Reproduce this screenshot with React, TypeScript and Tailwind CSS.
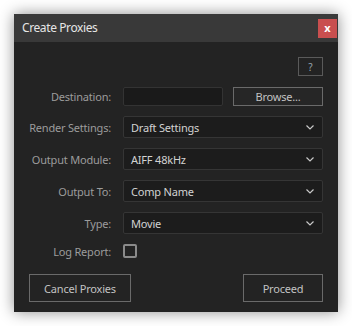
import React from "react";

const font = { fontFamily: '"Noto Sans", "Open Sans", sans-serif' };

function Chevron() {
  return (
    <svg width="8" height="5" viewBox="0 0 8 5" className="shrink-0">
      <path d="M0.5 0.5 L4 4 L7.5 0.5" fill="none" stroke="#c8c8c8" strokeWidth="1.2" />
    </svg>
  );
}

function Row({ label, children }: { label: string; children: React.ReactNode }) {
  return (
    <div className="flex items-center">
      <div className="w-[97px] text-right text-[11px] tracking-[-0.2px] text-[#9c9c9c] leading-none">{label}</div>
      <div className="ml-[12px] flex items-center">{children}</div>
    </div>
  );
}

function Select({ value }: { value: string }) {
  return (
    <div className="w-[200px] h-[22px] bg-[#1c1c1c] border border-[#353535] rounded-[2px] flex items-center justify-between pl-[7px] pr-[8px]">
      <span className="text-[11px] tracking-[-0.2px] text-[#d2d2d2] leading-none">{value}</span>
      <Chevron />
    </div>
  );
}

export default function App() {
  return (
    <div className="w-[352px] h-[326px] bg-white p-[14px]" style={font}>
      <div className="w-[324px] h-[298px] bg-[#232323] shadow-[0_0_14px_rgba(0,0,0,0.45)] flex flex-col">
        <div className="h-[28px] bg-[#393939] flex items-center justify-between pl-[8px] pr-[1px]">
          <span className="text-[12px] tracking-[-0.4px] text-[#e6e6e6] leading-none">Create Proxies</span>
          <div className="w-[19px] h-[19px] bg-[#c94f4f] flex items-center justify-center text-white text-[11px] font-bold leading-none pb-[2px]">
            x
          </div>
        </div>
        <div className="flex flex-col pt-[15px] pr-[15px]">
          <div className="flex justify-end">
            <div className="w-[25px] h-[19px] border border-[#5a5a5a] flex items-center justify-center text-[10px] text-[#9aa4ae] leading-none">
              ?
            </div>
          </div>
          <div className="mt-[11px] flex flex-col gap-[10px]">
            <Row label="Destination:">
              <div className="w-[100px] h-[19px] bg-[#1a1a1a] border border-[#333333] rounded-[2px]" />
              <div className="ml-[10px] w-[90px] h-[19px] border border-[#6a6a6a] bg-[#262626] flex items-center justify-center text-[11px] tracking-[-0.2px] text-[#c2c2c2] leading-none">
                Browse...
              </div>
            </Row>
            <Row label="Render Settings:">
              <Select value="Draft Settings" />
            </Row>
            <Row label="Output Module:">
              <Select value="AIFF 48kHz" />
            </Row>
            <Row label="Output To:">
              <Select value="Comp Name" />
            </Row>
            <Row label="Type:">
              <Select value="Movie" />
            </Row>
            <Row label="Log Report:">
              <div className="w-[14px] h-[14px] border-[2px] border-[#8a8a8a] rounded-[2px]" />
            </Row>
          </div>
          <div className="mt-[16px] flex justify-between pl-[15px]">
            <div className="w-[102px] h-[28px] border border-[#6a6a6a] flex items-center justify-center text-[11px] tracking-[-0.2px] text-[#c2c2c2] leading-none">
              Cancel Proxies
            </div>
            <div className="w-[80px] h-[28px] border border-[#6a6a6a] flex items-center justify-center text-[11px] tracking-[-0.2px] text-[#c2c2c2] leading-none">
              Proceed
            </div>
          </div>
        </div>
      </div>
    </div>
  );
}
